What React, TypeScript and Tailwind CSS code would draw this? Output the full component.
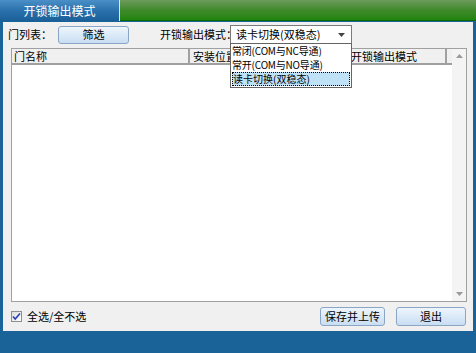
export default function App() {
  const font = "font-['Noto_Sans_CJK_SC',sans-serif]";
  return (
    <div className={`w-[476px] h-[353px] bg-[#1a6399] flex flex-col overflow-hidden text-[11px] leading-none text-black whitespace-nowrap ${font}`}>
      {/* title bar */}
      <div className="h-[21px] flex shrink-0">
        <div className="w-[119px] bg-gradient-to-b from-[#4a8fc6] via-[#2a72ad] to-[#1a5f98] text-white text-[12px] flex items-center justify-center">
          开锁输出模式
        </div>
        <div className="w-[1px] bg-[#d8e4ee]" />
        <div className="flex-1 bg-gradient-to-b from-[#6d9b5c] via-[#3f8a2a] to-[#1f850c] border-b border-[#0f6a05]" />
      </div>

      {/* panel */}
      <div className="relative mx-[3px] mt-[1px] h-[309px] bg-[#f0f0f0] flex flex-col px-[5px] pt-[3px]">
        <div className="flex items-center h-[19px]">
          <span className="w-[50px]">门列表：</span>
          <button className="w-[71px] h-[18px] rounded-[3px] border border-[#8aa6c4] bg-gradient-to-b from-[#eef5fc] to-[#c9def3]">
            筛选
          </button>
          <span className="ml-[31px] w-[70px]">开锁输出模式：</span>
          <div className="w-[122px] h-[19px] bg-white border border-[#7a7a7a] flex items-center pl-[5px]">
            <span className="flex-1">读卡切换(双稳态)</span>
            <svg width="7" height="4" viewBox="0 0 7 4" className="mr-[6px]">
              <path d="M0 0h7L3.5 4z" fill="#444" />
            </svg>
          </div>
        </div>

        {/* table */}
        <div className="mt-[4px] ml-[3px] w-[456px] h-[254px] bg-white border border-[#a0a0a0] flex">
          <div className="flex-1 flex flex-col">
            <div className="h-[16px] flex bg-[#f0f0f0] border-b-2 border-[#a0a0a0]">
              <div className="w-[178px] border-r-2 border-[#a0a0a0] pl-[2px] flex items-center">门名称</div>
              <div className="w-[159px] border-r-2 border-[#a0a0a0] pl-[3px] flex items-center">安装位置</div>
              <div className="w-[98px] border-r-2 border-[#a0a0a0] pl-[2px] flex items-center">开锁输出模式</div>
              <div className="flex-1" />
            </div>
          </div>
          <div className="w-[14px] bg-[#f4f4f4] flex flex-col items-center justify-between py-[5px]">
            <svg width="7" height="4" viewBox="0 0 7 4">
              <path d="M0 4h7L3.5 0z" fill="#9a9a9a" />
            </svg>
            <svg width="7" height="4" viewBox="0 0 7 4">
              <path d="M0 0h7L3.5 4z" fill="#9a9a9a" />
            </svg>
          </div>
        </div>

        {/* bottom row */}
        <div className="mt-[4px] flex items-center h-[20px]">
          <div className="ml-[3px] w-[11px] h-[11px] border border-[#8e8f8f] bg-gradient-to-br from-[#dcdcdc] to-[#ffffff] flex items-center justify-center">
            <svg width="9" height="9" viewBox="0 0 9 9">
              <path d="M1 4.5l2.2 2.5L8 1.5" stroke="#2a3fb8" strokeWidth="1.6" fill="none" />
            </svg>
          </div>
          <span className="ml-[5px]">全选/全不选</span>
          <div className="flex-1" />
          <button className="w-[65px] h-[19px] rounded-[3px] border border-[#8aa6c4] bg-gradient-to-b from-[#eef5fc] to-[#c9def3]">
            保存并上传
          </button>
          <button className="ml-[11px] mr-[2px] w-[70px] h-[19px] rounded-[3px] border border-[#8aa6c4] bg-gradient-to-b from-[#eef5fc] to-[#c9def3]">
            退出
          </button>
        </div>

        {/* dropdown list */}
        <div className="absolute left-[227px] top-[21px] w-[122px] bg-white border border-[#646464] flex flex-col px-[1px] text-[10px]">
          <div className="h-[14px] flex items-center tracking-[-0.2px]">常闭(COM与NC导通)</div>
          <div className="h-[14px] flex items-center tracking-[-0.2px]">常开(COM与NO导通)</div>
          <div className="h-[14px] mb-[1px] flex items-center bg-[#bfe2f6] border border-dotted border-black">读卡切换(双稳态)</div>
        </div>
      </div>
    </div>
  );
}
